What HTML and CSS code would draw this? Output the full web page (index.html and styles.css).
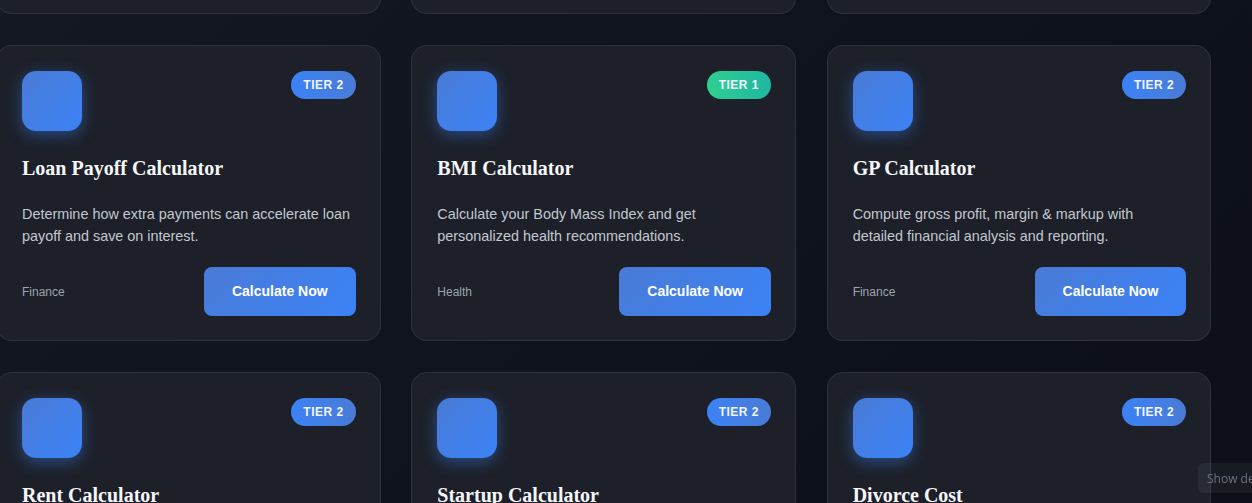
FILE: index.html
```html
<!DOCTYPE html>
<html lang="en">
<head>
<meta charset="utf-8">
<title>Calculators</title>
<link rel="stylesheet" href="styles.css">
</head>
<body>
<main class="grid">
  <article class="card">
    <div class="card-head"><div class="icon"></div><span class="badge tier2">TIER 2</span></div>
    <h3 class="title">Mortgage Calculator</h3>
    <p class="desc">Estimate monthly mortgage payments with taxes, insurance and amortization details.</p>
    <div class="card-foot"><span class="cat">Finance</span><a class="btn" href="#">Calculate Now</a></div>
  </article>
  <article class="card">
    <div class="card-head"><div class="icon"></div><span class="badge tier2">TIER 2</span></div>
    <h3 class="title">Salary Calculator</h3>
    <p class="desc">Convert salary between hourly, monthly and annual amounts with tax estimates.</p>
    <div class="card-foot"><span class="cat">Finance</span><a class="btn" href="#">Calculate Now</a></div>
  </article>
  <article class="card">
    <div class="card-head"><div class="icon"></div><span class="badge tier2">TIER 2</span></div>
    <h3 class="title">Tip Calculator</h3>
    <p class="desc">Split bills and calculate tips quickly for any group size and service level.</p>
    <div class="card-foot"><span class="cat">Finance</span><a class="btn" href="#">Calculate Now</a></div>
  </article>

  <article class="card">
    <div class="card-head"><div class="icon"></div><span class="badge tier2">TIER 2</span></div>
    <h3 class="title">Loan Payoff Calculator</h3>
    <p class="desc">Determine how extra payments can accelerate loan payoff and save on interest.</p>
    <div class="card-foot"><span class="cat">Finance</span><a class="btn" href="#">Calculate Now</a></div>
  </article>
  <article class="card">
    <div class="card-head"><div class="icon"></div><span class="badge tier1">TIER 1</span></div>
    <h3 class="title">BMI Calculator</h3>
    <p class="desc">Calculate your Body Mass Index and get personalized health recommendations.</p>
    <div class="card-foot"><span class="cat">Health</span><a class="btn" href="#">Calculate Now</a></div>
  </article>
  <article class="card">
    <div class="card-head"><div class="icon"></div><span class="badge tier2">TIER 2</span></div>
    <h3 class="title">GP Calculator</h3>
    <p class="desc">Compute gross profit, margin &amp; markup with detailed financial analysis and reporting.</p>
    <div class="card-foot"><span class="cat">Finance</span><a class="btn" href="#">Calculate Now</a></div>
  </article>

  <article class="card">
    <div class="card-head"><div class="icon"></div><span class="badge tier2">TIER 2</span></div>
    <h3 class="title">Rent Calculator</h3>
    <p class="desc">Find out how much rent you can afford based on your income and expenses.</p>
    <div class="card-foot"><span class="cat">Finance</span><a class="btn" href="#">Calculate Now</a></div>
  </article>
  <article class="card">
    <div class="card-head"><div class="icon"></div><span class="badge tier2">TIER 2</span></div>
    <h3 class="title">Startup Calculator</h3>
    <p class="desc">Estimate startup costs, runway and break-even point for your new business.</p>
    <div class="card-foot"><span class="cat">Business</span><a class="btn" href="#">Calculate Now</a></div>
  </article>
  <article class="card">
    <div class="card-head"><div class="icon"></div><span class="badge tier2">TIER 2</span></div>
    <h3 class="title">Divorce Cost</h3>
    <p class="desc">Estimate the total cost of divorce including legal fees and asset division.</p>
    <div class="card-foot"><span class="cat">Legal</span><a class="btn" href="#">Calculate Now</a></div>
  </article>
</main>
<button class="show-more" type="button">Show details</button>
</body>
</html>
```

FILE: styles.css
```css
html, body {
  margin: 0;
  padding: 0;
  height: 100%;
  overflow: hidden;
}
body {
  background: linear-gradient(135deg, #141822 0%, #0f131c 50%, #0c0f17 100%);
  font-family: "Liberation Sans", Arial, sans-serif;
  color: #e5e7eb;
}
.grid {
  display: grid;
  grid-template-columns: repeat(3, 384.67px);
  column-gap: 30.67px;
  row-gap: 31px;
  margin: -282px 0 0 -4px;
}
.card {
  box-sizing: border-box;
  height: 296px;
  background: #1d2029;
  border: 1px solid rgba(255, 255, 255, 0.08);
  border-radius: 16px;
  padding: 25px 25px 24px;
  display: flex;
  flex-direction: column;
}
.card-head {
  display: flex;
  justify-content: space-between;
  align-items: flex-start;
  margin-bottom: 25px;
}
.icon {
  width: 60px;
  height: 60px;
  border-radius: 14px;
  background: linear-gradient(135deg, #4a7bd6 0%, #3b82f6 100%);
  box-shadow: 0 4px 16px rgba(59, 130, 246, 0.45);
}
.badge {
  display: inline-block;
  padding: 6px 12px;
  font-size: 12px;
  line-height: 16px;
  font-weight: 700;
  letter-spacing: 0.5px;
  color: #f1f5ff;
  border-radius: 999px;
  margin-right: -1px;
}
.tier2 {
  background: linear-gradient(90deg, #3b82f6 0%, #4a7bd6 100%);
}
.tier1 {
  background: linear-gradient(90deg, #2fcf8f 0%, #1fb7a2 100%);
}
.title {
  margin: 0 0 23px;
  font-family: "Liberation Serif", "Times New Roman", serif;
  font-weight: 700;
  font-size: 20px;
  line-height: 24px;
  color: #f5f6f8;
}
.desc {
  margin: 0 0 20px;
  font-size: 14.4px;
  line-height: 22px;
  color: #c3c7cf;
  height: 44px;
}
.card-foot {
  display: flex;
  justify-content: space-between;
  align-items: center;
}
.cat {
  font-size: 12px;
  color: #9ca3af;
}
.btn {
  display: inline-block;
  padding: 16px 28px;
  font-size: 14px;
  line-height: 17px;
  font-weight: 700;
  color: #ffffff;
  text-decoration: none;
  border-radius: 8px;
  background: linear-gradient(135deg, #4a7bd6 0%, #3b82f6 100%);
  margin-right: -1px;
}
.show-more {
  position: fixed;
  left: 1198px;
  top: 463px;
  height: 30px;
  padding: 0 9px;
  border: none;
  border-radius: 6px;
  background: rgba(255, 255, 255, 0.05);
  color: #6b7280;
  font-family: "Open Sans", "Noto Sans", sans-serif;
  font-size: 12px;
  white-space: nowrap;
}
```
